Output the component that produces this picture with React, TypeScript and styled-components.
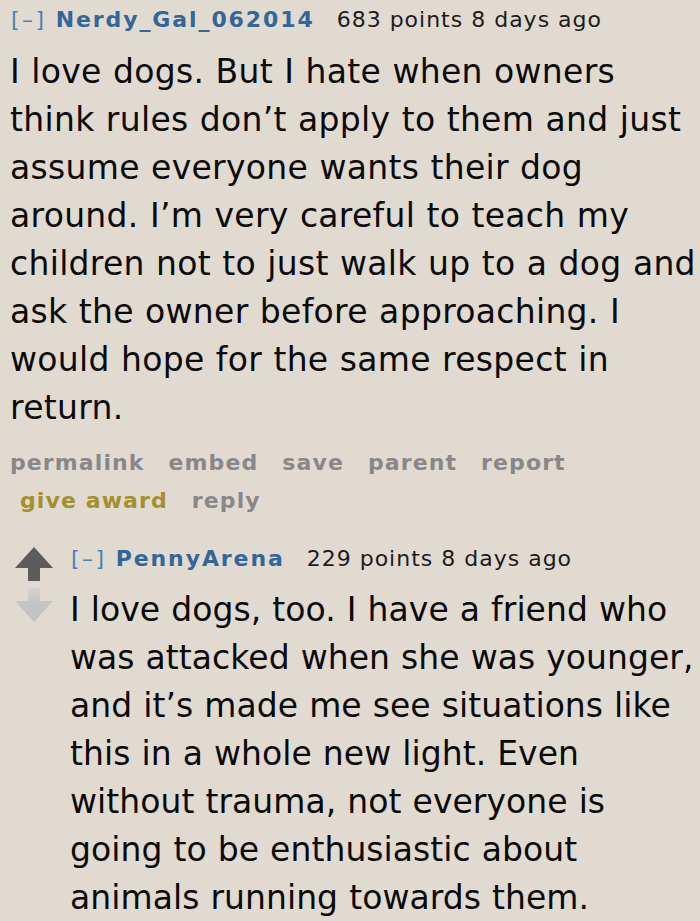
import React from "react";
import styled, { createGlobalStyle } from "styled-components";

const Global = createGlobalStyle`
  html, body { margin: 0; padding: 0; background: #e1dad1; }
  body { font-family: "DejaVu Sans", Verdana, sans-serif; }
`;

const Page = styled.div`
  width: 700px;
  height: 921px;
  overflow: hidden;
  background: #e1dad1;
  padding: 4px 0 0 10px;
  box-sizing: border-box;
`;

const Comment = styled.div`
  display: flex;
  flex-direction: column;
`;

const Tagline = styled.div`
  font-size: 22px;
  letter-spacing: 1px;
  line-height: 32px;
  white-space: nowrap;
`;

const Expand = styled.span`
  color: #4f7fb3;
  letter-spacing: 2.5px;
  margin-left: 1px;
`;

const Author = styled.span`
  color: #336699;
  font-weight: bold;
  letter-spacing: 1.9px;
  margin-left: 9px;
`;

const Meta = styled.span`
  color: #1c1c1c;
  margin-left: 22px;
`;

const Body = styled.div`
  font-size: 33px;
  letter-spacing: 0.3px;
  word-spacing: 0.5px;
  line-height: 48px;
  color: #0a0a0a;
  margin-top: 12px;
  white-space: nowrap;
`;

const ChildBody = styled(Body)`
  margin-top: 11px;
  letter-spacing: 0.05px;
`;

const Buttons = styled.div`
  display: flex;
  flex-wrap: wrap;
  column-gap: 24px;
  font-size: 22px;
  letter-spacing: 1.1px;
  font-weight: bold;
  line-height: 38px;
  width: 600px;
  margin-top: 12px;
`;

const Action = styled.span<{ $gold?: boolean }>`
  color: ${(p) => (p.$gold ? "#a4902c" : "#888888")};
  padding-left: ${(p) => (p.$gold ? "10px" : "0")};
`;

const Child = styled.div`
  display: flex;
  margin-top: 23px;
`;

const Votes = styled.div`
  display: flex;
  flex-direction: column;
  gap: 7px;
  width: 38px;
  padding-top: 4px;
  margin-left: 5px;
`;

const ChildMain = styled.div`
  display: flex;
  flex-direction: column;
  margin-left: 17px;
`;

const UpArrow = ({ color }: { color: string }) => (
  <svg width="38" height="34" viewBox="0 0 38 34">
    <path d="M19 0 L38 21 L25 21 L25 34 L13 34 L13 21 L0 21 Z" fill={color} />
  </svg>
);

const DownArrow = () => (
  <svg width="38" height="34" viewBox="0 0 38 34">
    <defs>
      <linearGradient id="dn" x1="0" y1="0" x2="0" y2="1">
        <stop offset="0" stopColor="#d6d4d1" />
        <stop offset="0.45" stopColor="#c4c4c4" />
        <stop offset="1" stopColor="#c2c2c2" />
      </linearGradient>
    </defs>
    <path d="M13 0 L25 0 L25 13 L38 13 L19 34 L0 13 L13 13 Z" fill="url(#dn)" />
  </svg>
);

export default function App() {
  return (
    <Page>
      <Global />
      <Comment>
        <Tagline>
          <Expand>[–]</Expand>
          <Author>Nerdy_Gal_062014</Author>
          <Meta>683 points 8 days ago</Meta>
        </Tagline>
        <Body>
          I love dogs. But I hate when owners
          <br />
          think rules don’t apply to them and just
          <br />
          assume everyone wants their dog
          <br />
          around. I’m very careful to teach my
          <br />
          children not to just walk up to a dog and
          <br />
          ask the owner before approaching. I
          <br />
          would hope for the same respect in
          <br />
          return.
        </Body>
        <Buttons>
          <Action>permalink</Action>
          <Action>embed</Action>
          <Action>save</Action>
          <Action>parent</Action>
          <Action>report</Action>
          <Action $gold>give award</Action>
          <Action>reply</Action>
        </Buttons>
      </Comment>
      <Child>
        <Votes>
          <UpArrow color="#5c5c5c" />
          <DownArrow />
        </Votes>
        <ChildMain>
          <Tagline>
            <Expand>[–]</Expand>
            <Author>PennyArena</Author>
            <Meta>229 points 8 days ago</Meta>
          </Tagline>
          <ChildBody>
            I love dogs, too. I have a friend who
            <br />
            was attacked when she was younger,
            <br />
            and it’s made me see situations like
            <br />
            this in a whole new light. Even
            <br />
            without trauma, not everyone is
            <br />
            going to be enthusiastic about
            <br />
            animals running towards them.
          </ChildBody>
        </ChildMain>
      </Child>
    </Page>
  );
}
